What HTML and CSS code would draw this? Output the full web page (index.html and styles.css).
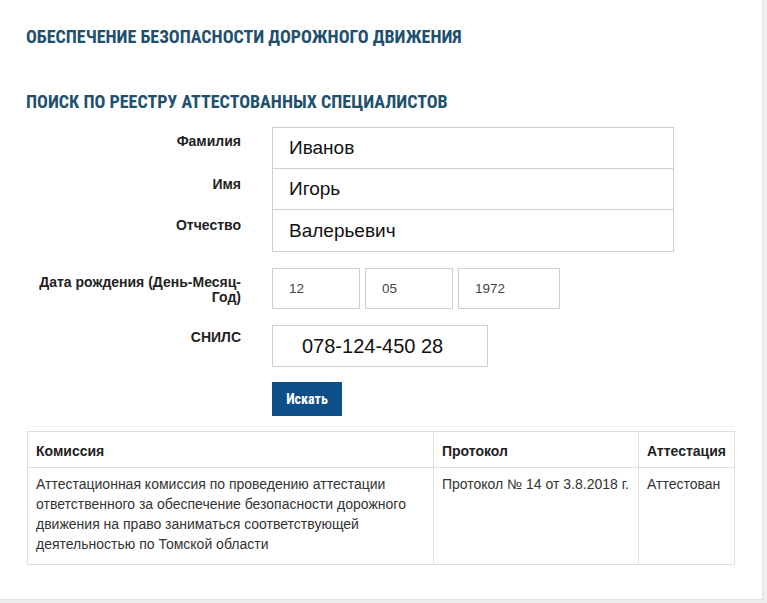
FILE: index.html
```html
<!DOCTYPE html>
<html lang="ru">
<head>
<meta charset="utf-8">
<title>Поиск по реестру аттестованных специалистов</title>
<link rel="stylesheet" href="styles.css">
</head>
<body>
<div class="card">
  <h1 class="title">Обеспечение безопасности дорожного движения</h1>
  <h2 class="subtitle">Поиск по реестру аттестованных специалистов</h2>
  <form class="search">
    <div class="grid">
      <label class="lbl">Фамилия</label>
      <input class="inp inp-name" type="text" value="Иванов">
      <label class="lbl lbl-stack">Имя</label>
      <input class="inp inp-name inp-stack" type="text" value="Игорь">
      <label class="lbl lbl-stack">Отчество</label>
      <input class="inp inp-name inp-stack inp-last" type="text" value="Валерьевич">

      <label class="lbl lbl-date gap-date">Дата рождения (День-Месяц-Год)</label>
      <div class="date gap-date">
        <input class="inp inp-date" type="text" value="12">
        <input class="inp inp-date" type="text" value="05">
        <input class="inp inp-date inp-year" type="text" value="1972">
      </div>

      <label class="lbl lbl-snils gap-snils">СНИЛС</label>
      <input class="inp inp-snils gap-snils" type="text" value="078-124-450 28">

      <span class="gap-btn"></span>
      <button class="btn gap-btn" type="button">Искать</button>
    </div>
  </form>
  <div class="divider"></div>
  <table class="result">
    <thead>
      <tr>
        <th class="c1">Комиссия</th>
        <th class="c2">Протокол</th>
        <th class="c3">Аттестация</th>
      </tr>
    </thead>
    <tbody>
      <tr>
        <td>Аттестационная комиссия по проведению аттестации ответственного за обеспечение безопасности дорожного движения на право заниматься соответствующей деятельностью по Томской области</td>
        <td>Протокол № 14 от 3.8.2018 г.</td>
        <td>Аттестован</td>
      </tr>
    </tbody>
  </table>
</div>
</body>
</html>
```

FILE: styles.css
```css
html, body {
  margin: 0;
  padding: 0;
}
body {
  background: #eeeeee;
  font-family: "Liberation Sans", Arial, sans-serif;
  color: #222;
}
.card {
  background: #fff;
  width: 763px;
  height: 600px;
  box-sizing: border-box;
  border-right: 1px solid #e2e2e2;
  border-bottom: 1px solid #e2e2e2;
  padding: 27px 0 0 26px;
}
.title, .subtitle {
  font-family: "Roboto Condensed", "Liberation Sans Narrow", "Arial Narrow", sans-serif;
  font-weight: 700;
  font-size: 18px;
  line-height: 20px;
  color: #21506d;
  text-transform: uppercase;
  margin: 0;
}
.subtitle {
  margin-top: 45px;
}
.search {
  margin-top: 15px;
}
.grid {
  display: grid;
  grid-template-columns: 215px auto;
  column-gap: 31px;
  justify-content: start;
  align-items: start;
}
.lbl {
  font-size: 14px;
  font-weight: 700;
  line-height: 15px;
  text-align: right;
  color: #222;
  padding-top: 7px;
}
.lbl-stack {
  padding-top: 8px;
}
.lbl-date {
  padding-top: 7px;
}
.lbl-snils {
  padding-top: 5px;
}
.inp {
  box-sizing: border-box;
  height: 42px;
  border: 1px solid #cfcfcf;
  background: #fff;
  font-family: "Liberation Sans", Arial, sans-serif;
  color: #111;
  padding: 0 0 0 16px;
  margin: 0;
  outline: none;
}
.inp-name {
  width: 402px;
  font-size: 19px;
}
.inp-stack {
  margin-top: -1px;
}
.inp-last {
  height: 43px;
}
.gap-date {
  margin-top: 16px;
}
.gap-snils {
  margin-top: 16px;
}
.gap-btn {
  margin-top: 15px;
}
.date {
  display: flex;
  gap: 5px;
}
.inp-date {
  width: 88px;
  height: 41px;
  font-size: 13.5px;
  color: #444;
}
.inp-year {
  width: 102px;
}
.inp-snils {
  width: 216px;
  font-size: 20px;
  padding-left: 29px;
}
.btn {
  width: 70px;
  height: 34px;
  background: #0f4f88;
  color: #fff;
  border: 0;
  font-family: "Roboto Condensed", "Liberation Sans Narrow", "Arial Narrow", sans-serif;
  font-weight: 700;
  font-size: 14px;
  padding: 0;
}
.divider {
  height: 1px;
  background: #f3f3f3;
  width: 708px;
  margin: 10px 0 0 1px;
}
.result {
  margin: 4px 0 0 1px;
  width: 708px;
  border-collapse: collapse;
  font-size: 14px;
  line-height: 20px;
  color: #333;
}
.result th, .result td {
  border: 1px solid #dedede;
  text-align: left;
  vertical-align: top;
}
.result th {
  font-size: 14px;
  font-weight: 700;
  color: #222;
  padding: 9px 8px 6px;
}
.result td {
  padding: 6px 8px 10px;
}
.c1 { width: 389px; }
.c2 { width: 188px; }
```
